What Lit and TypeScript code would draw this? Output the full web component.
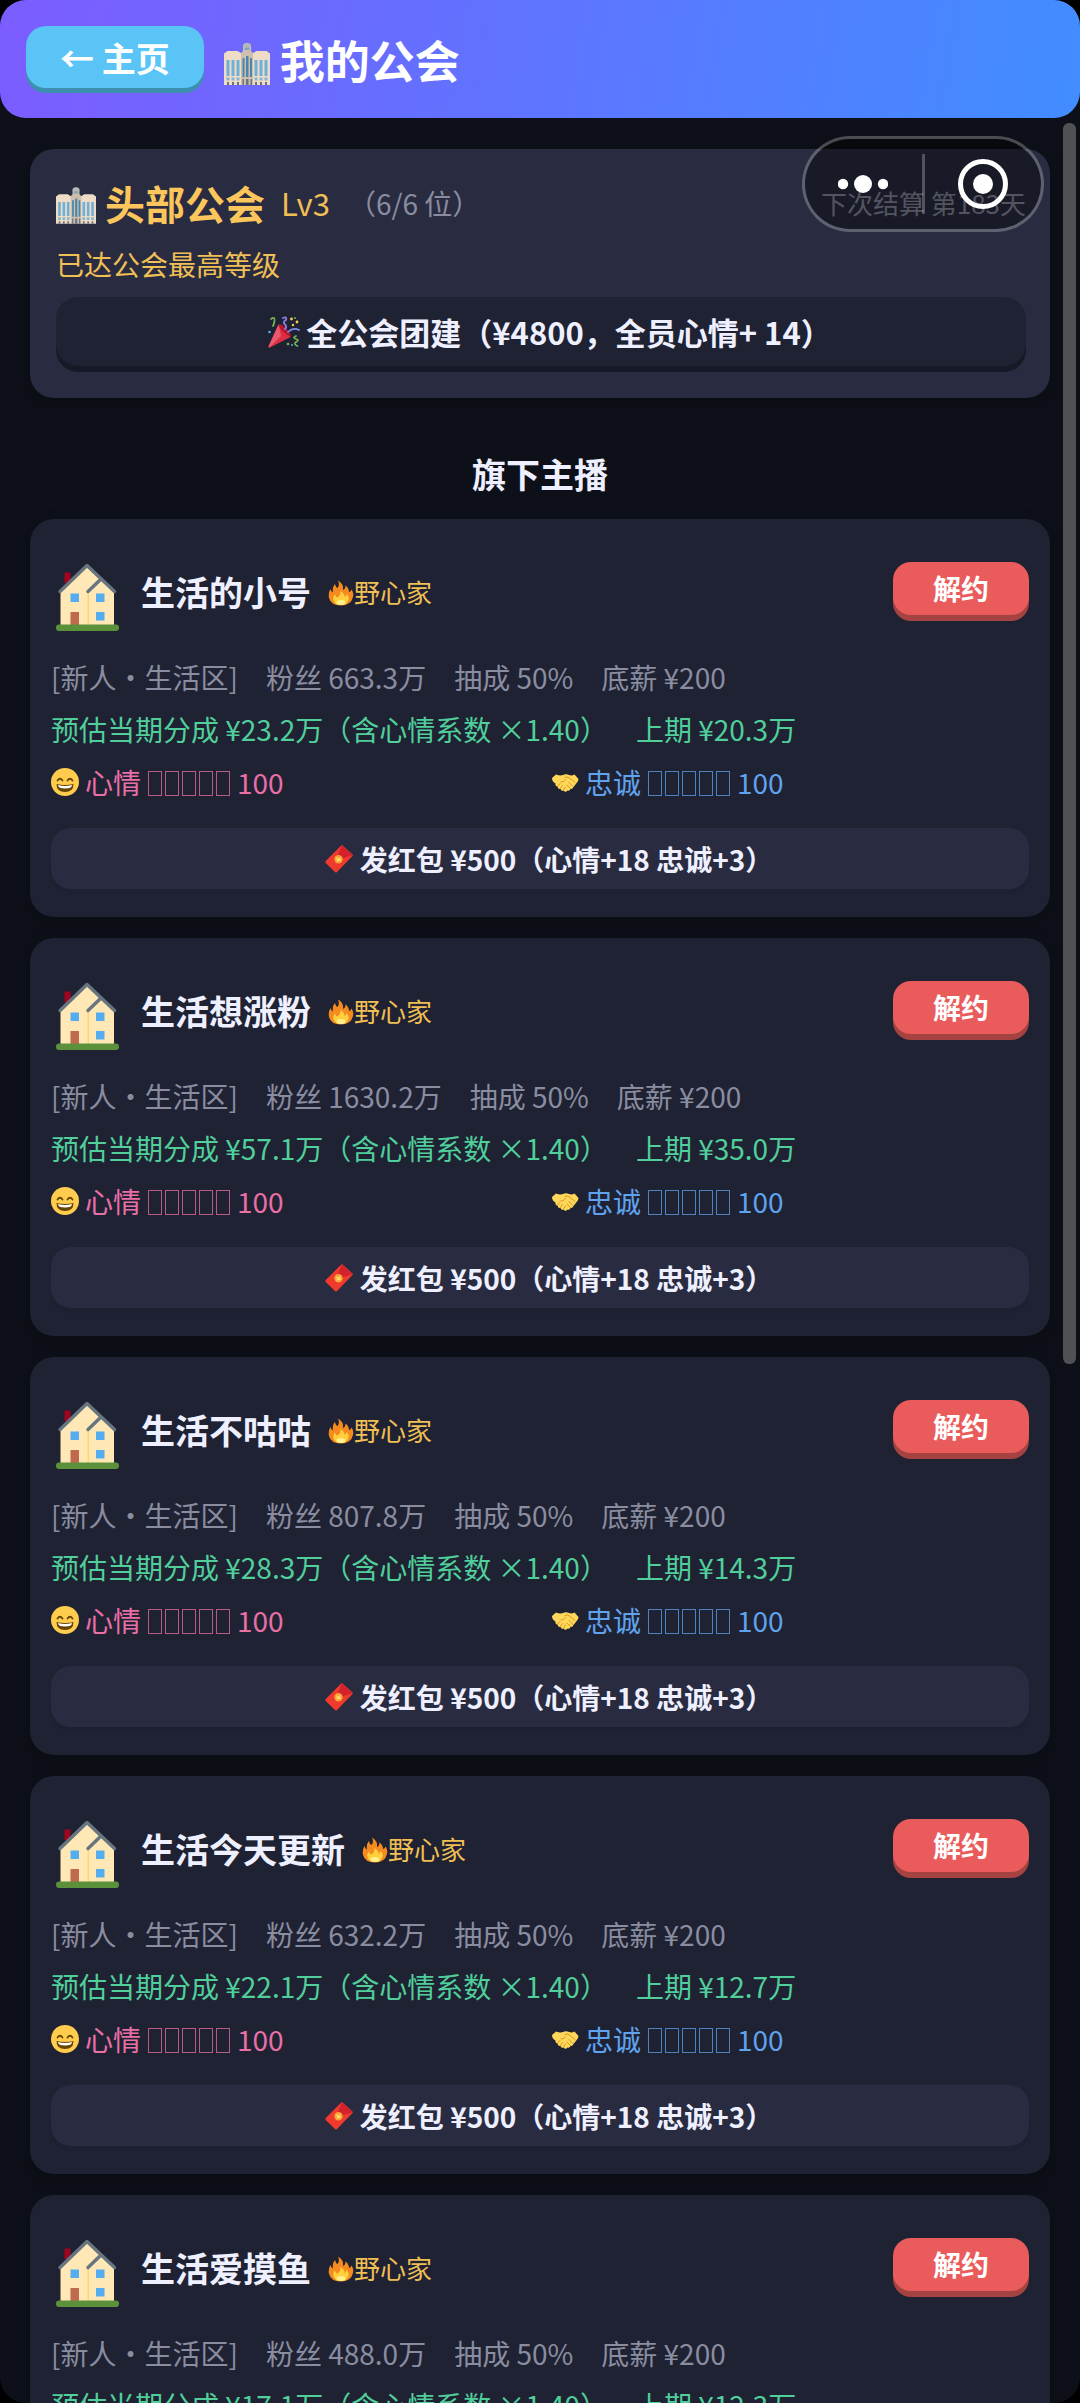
import { LitElement, html, css, svg } from "lit";
import { customElement, property } from "lit/decorators.js";

interface Streamer {
  name: string;
  fans: string;
  share: string;
  last: string;
}

const STREAMERS: Streamer[] = [
  { name: "生活的小号", fans: "663.3万", share: "¥23.2万", last: "¥20.3万" },
  { name: "生活想涨粉", fans: "1630.2万", share: "¥57.1万", last: "¥35.0万" },
  { name: "生活不咕咕", fans: "807.8万", share: "¥28.3万", last: "¥14.3万" },
  { name: "生活今天更新", fans: "632.2万", share: "¥22.1万", last: "¥12.7万" },
  { name: "生活爱摸鱼", fans: "488.0万", share: "¥17.1万", last: "¥12.3万" },
];

const buildingIcon = html`<svg class="building" viewBox="0 0 46 43" aria-hidden="true">
  <path d="M0 10.500 L3.500 8 H13.500 L17.500 10.500 V42 H0Z M28.500 10.500 L32.500 8 H42.500 L46 10.500 V42 H28.500Z" fill="#efdcc6" />
  <path d="M17 10 L19 8 V3 Q19 0 23 0 Q27 0 27 3 V8 L29 10 V42 H17Z" fill="#cdbfae" />
  <path d="M19 4 Q19.500 0.500 23 0.500 Q26.500 0.500 27 4Z" fill="#aeb9bb" />
  <path d="M20.500 4.500 H25.500 V7 H20.500Z" fill="#7fa3b8" />
  <path d="M2.500 17 H5.500 V33 H2.500Z M7.500 17 H10.500 V33 H7.500Z M12.500 17 H15.500 V33 H12.500Z M30.500 17 H33.500 V33 H30.500Z M35.500 17 H38.500 V33 H35.500Z M40.500 17 H43.500 V33 H40.500Z" fill="#6fb0d8" />
  <path d="M18.500 15 H20.500 V34 H18.500Z M22 13 H24.500 V34 H22Z M26 15 H28 V34 H26Z" fill="#4c86ac" />
  <path d="M2.500 34.500 H5.500 V37.500 H2.500Z M7.500 34.500 H10.500 V37.500 H7.500Z M12.500 34.500 H15.500 V37.500 H12.500Z M30.500 34.500 H33.500 V37.500 H30.500Z M35.500 34.500 H38.500 V37.500 H35.500Z M40.500 34.500 H43.500 V37.500 H40.500Z" fill="#83b6d2" />
  <path d="M3 39 H5 V42 H3Z M8 39 H10 V42 H8Z M13 39 H15 V42 H13Z M18.500 36 H20 V42 H18.500Z M22 36 H24.500 V42 H22Z M26.500 36 H28 V42 H26.500Z M31 39 H33 V42 H31Z M36 39 H38 V42 H36Z M41 39 H43 V42 H41Z" fill="#6a7480" />
</svg>`;

const houseIcon = html`<svg class="house" viewBox="-5 -10 69 78" aria-hidden="true">
  <path d="M8.500 9.500 H14.500 V20 H8.500Z" fill="#a0041e" />
  <path d="M31 3 L58 29 V62 H4.500 V29Z" fill="#ffe8b6" />
  <path d="M31.500 30 H33 V62 H31.500Z" fill="#ffd767" />
  <path d="M4 28.500 L31 2.500 L58.500 28.500 M44 17 L32 28.500" fill="none" stroke="#66757f" stroke-width="3.400" stroke-linecap="round" stroke-linejoin="round" />
  <path d="M14.500 30.500 h8.500 v8.500 h-8.500Z M40 30.500 h8.500 v8.500 h-8.500Z M40 49 h8.500 v8.500 h-8.500Z" fill="#55acee" />
  <path d="M14.500 49 h8.500 v13 h-8.500Z" fill="#c1694f" />
  <rect x="0" y="61.500" width="63" height="6.500" rx="3" fill="#5c913b" />
</svg>`;

const fireIcon = html`<svg class="i26" viewBox="0 0 26 26" aria-hidden="true">
  <path d="M10 0.500 Q16 4 15 10 Q17.500 9 17.500 5.500 Q21 8 21 12 Q23 11.500 23.500 9.500 Q26 13 25 17 Q23 25.500 13 25.500 Q3 25.500 1 18 Q0 13 2.500 9 Q3 12 5 12.500 Q4 7 7 4 Q7.500 7 9.500 8 Q12 5 10 0.500Z" fill="#f58a1f" />
  <path d="M12.500 11 Q17 14 16.500 17 Q18.500 16 18.500 14 Q21.500 17 20.500 20 Q18.500 25 13 25 Q7.500 25 5.500 20.500 Q4.500 17 7 14.500 Q7.500 17 9.500 17.500 Q13 15 12.500 11Z" fill="#ffd03e" />
  <ellipse cx="13" cy="22.500" rx="4.500" ry="2.500" fill="#fff08a" />
</svg>`;

const grinIcon = html`<svg class="i28" viewBox="0 0 28 28" aria-hidden="true">
  <circle cx="14" cy="14" r="14" fill="#ffcc4d" />
  <path d="M6.500 12.500 Q9 9 11.500 12.500 M16.500 12.500 Q19 9 21.500 12.500" fill="none" stroke="#664500" stroke-width="1.800" stroke-linecap="round" />
  <path d="M5.500 16 Q14 18 22.500 16 Q22.500 24 14 24 Q5.500 24 5.500 16Z" fill="#664500" />
  <path d="M7 17 Q14 18.800 21 17 Q21 20.500 14 20.500 Q7 20.500 7 17Z" fill="#fff" />
</svg>`;

const shakeIcon = html`<svg class="i28" viewBox="0 0 28 28" aria-hidden="true">
  <path d="M1 10 L5 6.500 Q9 8 12 7 Q15 5.500 18 7 Q21 8 23.500 6.500 L27.500 11 Q27.500 13 24.500 16.500 L22.500 19 Q21.500 21.500 19.500 21 Q18.500 23.500 16.500 22.500 Q14.500 25 12.500 22.500 Q10 23.500 9.500 21 Q7 21.500 6.500 18.500 Q4 18 4.500 15.500 Q1 13.500 1 10Z" fill="#ffd75a" />
  <path d="M14 9.500 Q16 8 18.500 10 L24 14.500 M10 14 Q13 14.500 14.500 11.500 M6.500 18 L9 15.500 M9.500 20.500 L11.500 17.500 M12.500 22 L14.500 19 M19.500 20.500 L16 17 M22 18.500 L18 14.500" fill="none" stroke="#d99a1c" stroke-width="1" stroke-linecap="round" />
</svg>`;

const envelopeIcon = html`<svg class="i28" viewBox="0 0 28 28" aria-hidden="true">
  <path d="M17.500 0.500 L27.500 9.500 Q28 10.200 27.500 11 L12 27 Q11 28 10 27 L0.700 18 Q0 17 0.700 16 L16 0.700 Q16.800 0 17.500 0.500Z" fill="#f03a2e" />
  <path d="M16.700 0.300 L27.700 10.200 L15 14 Q12.500 14 12.500 11Z" fill="#d3222b" />
  <circle cx="13.500" cy="14.300" r="4.200" fill="#f9a03a" />
  <path d="M11.500 12.500 L13 15.500 L16 15 M12 16.500 L15 12.500" fill="none" stroke="#ffe066" stroke-width="1.300" />
</svg>`;

const popperIcon = html`<svg class="i32" viewBox="0 0 32 32" aria-hidden="true">
  <path d="M10.500 8.500 Q17 11 22.500 21 L2 31.500 Q0 32 0.700 30Z" fill="#dd2e44" />
  <path d="M10.500 8.500 L13 20 L1.500 31.600 Q0.200 31.500 0.700 30Z" fill="#ea596e" />
  <path d="M10.500 8.500 Q12 15 22.500 21 Q24 19 19 13 Q13 7 10.500 8.500Z" fill="#b3162d" />
  <path d="M3 3 Q7 0 6.500 5 Q6 8 5 10 M28 20 Q24 21.500 28 23 Q32 24 28 26 Q25 28 29.500 30" fill="none" stroke="#77b255" stroke-width="1.700" stroke-linecap="round" />
  <path d="M15 2 Q19 0 18 4 Q14 6 17.500 9 Q19 11 17 13" fill="none" stroke="#8c7be0" stroke-width="1.900" stroke-linecap="round" />
  <path d="M20 16 Q25 11 31 14" fill="none" stroke="#7d8fe8" stroke-width="1.700" stroke-linecap="round" />
  <g fill="#ffcc4d"><circle cx="23.500" cy="3" r="1.400" /><circle cx="29" cy="6" r="1.400" /><circle cx="25" cy="9" r="1.200" /></g>
  <g fill="#55acee"><circle cx="1.500" cy="16" r="1.300" /><circle cx="24" cy="29" r="1" /></g>
  <g fill="#77b255"><circle cx="20" cy="28" r="1.300" /><circle cx="27" cy="2" r="1" /></g>
</svg>`;

const base = css`
  * {
    box-sizing: border-box;
  }
  button {
    font-family: inherit;
    border: 0;
    margin: 0;
    cursor: pointer;
    display: flex;
    align-items: center;
    justify-content: center;
    font-weight: 700;
  }
  svg {
    display: block;
    flex: none;
  }
  .i26 {
    width: 26px;
    height: 26px;
  }
  .i28 {
    width: 28px;
    height: 28px;
  }
  .i32 {
    width: 32px;
    height: 32px;
  }
`;

@customElement("stat-gauge")
class StatGauge extends LitElement {
  @property() label = "";
  @property({ type: Number }) value = 0;

  static styles = [
    base,
    css`
      :host {
        display: flex;
        align-items: center;
        gap: 7px;
      }
      .cells {
        display: flex;
        gap: 3px;
        padding-top: 3px;
      }
      .cell {
        width: 14px;
        height: 25px;
        border: 1px solid currentColor;
        opacity: 0.75;
      }
    `,
  ];

  render() {
    const cells = Array.from({ length: Math.round(this.value / 20) });
    return html`<span>${this.label}</span>
      <span class="cells" aria-hidden="true">${cells.map(() => html`<span class="cell"></span>`)}</span>
      <span>${this.value}</span>`;
  }
}

@customElement("streamer-card")
class StreamerCard extends LitElement {
  @property({ attribute: false }) data!: Streamer;

  static styles = [
    base,
    css`
      :host {
        display: block;
      }
      .card {
        background: #1f2233;
        border-radius: 24px;
        padding: 21px 21px 28px;
        box-shadow: 0 4px 16px rgba(0, 0, 0, 0.22);
        font-size: 28px;
        line-height: 52px;
      }
      .head {
        display: flex;
        align-items: center;
        height: 104px;
        margin-bottom: 7px;
      }
      .house {
        width: 69px;
        height: 78px;
        margin-right: 21px;
      }
      .name {
        margin: 0 17px 0 0;
        font-size: 34px;
        font-weight: 700;
        color: #eef0ff;
      }
      .tag {
        display: flex;
        align-items: center;
        font-size: 26px;
        color: #f0bf55;
      }
      .fire {
        padding-top: 2px;
      }
      .drop {
        margin: 0 0 8px auto;
        height: 53px;
        padding: 0 40px;
        border-radius: 18px;
        background: #ea5c5c;
        box-shadow: 0 6px 0 #a54242;
        color: #fff;
        font-size: 28px;
      }
      .line {
        margin: 0;
        white-space: nowrap;
      }
      .meta {
        color: #8a8da0;
      }
      .share {
        line-height: 53px;
        color: #50cf9b;
      }
      .last {
        margin-left: 14px;
      }
      .stats {
        display: grid;
        grid-template-columns: 1fr 1fr;
        gap: 22px;
      }
      .stat {
        display: flex;
        align-items: center;
        gap: 6px;
      }
      .mood {
        color: #e96fa6;
      }
      .loyal {
        color: #5fa3ee;
      }
      .gift {
        width: 100%;
        height: 61px;
        margin-top: 20px;
        padding: 0 0 0 18px;
        gap: 7px;
        border-radius: 20px;
        background: #292c41;
        box-shadow: 0 5px 0 #1d2030;
        color: #eef0ff;
        font-size: 28px;
      }
    `,
  ];

  render() {
    const d = this.data;
    return html`<article class="card">
      <div class="head">
        ${houseIcon}
        <h3 class="name">${d.name}</h3>
        <span class="tag"><span class="fire">${fireIcon}</span>野心家</span>
        <button class="drop" type="button">解约</button>
      </div>
      <p class="line meta">[新人・生活区]　粉丝 ${d.fans}　抽成 50%　底薪 ¥200</p>
      <p class="line share">预估当期分成 ${d.share}（含心情系数 ×1.40）　<span class="last">上期 ${d.last}</span></p>
      <div class="stats">
        <div class="stat mood">${grinIcon}<stat-gauge label="心情" .value=${100}></stat-gauge></div>
        <div class="stat loyal">${shakeIcon}<stat-gauge label="忠诚" .value=${100}></stat-gauge></div>
      </div>
      <button class="gift" type="button">${envelopeIcon}发红包 ¥500（心情+18 忠诚+3）</button>
    </article>`;
  }
}

@customElement("app-root")
class AppRoot extends LitElement {
  static styles = [
    base,
    css`
      :host {
        display: block;
        background: #000;
        font-family: "Noto Sans CJK SC", "Noto Sans", sans-serif;
      }
      .shell {
        position: relative;
        display: flex;
        flex-direction: column;
        height: 100vh;
        overflow: hidden;
        border-radius: 26px;
        background: #0d1018;
      }
      .bar {
        flex: none;
        display: flex;
        align-items: center;
        gap: 20px;
        height: 118px;
        padding: 0 26px;
        border-radius: 0 0 26px 26px;
        background: linear-gradient(100deg, #7c5cff, #418dff);
      }
      .home {
        height: 62px;
        margin-bottom: 4px;
        padding: 0 34px;
        border-radius: 20px;
        background: #5ac4f6;
        box-shadow: 0 5px 0 #3c8fae;
        color: #fff;
        font-size: 34px;
      }
      .title {
        display: flex;
        align-items: center;
        gap: 10px;
        margin: 0;
        padding-top: 2px;
        font-size: 45px;
        line-height: 60px;
        color: #fff;
      }
      .title .building {
        width: 46px;
        height: 43px;
        margin-top: 8px;
      }
      .main {
        flex: 1;
        min-height: 0;
        overflow: hidden auto;
        scrollbar-width: none;
        padding: 31px 30px 0;
      }
      .guild {
        padding: 24px 24px 26px 26px;
        border-radius: 24px;
        background: #292c41;
        box-shadow: 0 4px 16px rgba(0, 0, 0, 0.22);
      }
      .row {
        display: flex;
        align-items: center;
        line-height: 60px;
        white-space: nowrap;
      }
      .row .building {
        width: 40px;
        height: 38px;
        margin: 6px 9px 0 0;
      }
      .gname {
        margin: 0;
        font-size: 40px;
        color: #fcc65c;
      }
      .lv {
        margin: 0 18px 0 16px;
        font-size: 31px;
        color: #f0bf55;
      }
      .count,
      .due {
        font-size: 28px;
        color: #8a8da0;
      }
      .due {
        margin-left: auto;
        font-size: 26px;
      }
      .max {
        margin: 11px 0 13px;
        font-size: 28px;
        line-height: 40px;
        color: #f0bf55;
      }
      .party {
        width: 100%;
        height: 69px;
        margin-bottom: 6px;
        padding: 0 0 0 18px;
        gap: 6px;
        border-radius: 22px;
        background: #1f2233;
        box-shadow: 0 6px 0 #171926;
        color: #eef0ff;
        font-size: 31px;
        line-height: 60px;
      }
      .sub {
        margin: 51px 0 20px;
        font-size: 34px;
        line-height: 50px;
        text-align: center;
        color: #eef0ff;
      }
      .list {
        display: flex;
        flex-direction: column;
        gap: 21px;
      }
      .thumb {
        position: absolute;
        top: 123px;
        right: 4px;
        width: 13px;
        height: 1241px;
        border-radius: 6px;
        background: #4f5154;
      }
      .capsule {
        position: absolute;
        top: 136px;
        right: 36px;
        width: 242px;
        height: 96px;
        display: flex;
        align-items: center;
        border: 3px solid rgba(255, 255, 255, 0.25);
        border-radius: 48px;
        background: rgba(0, 0, 0, 0.4);
        background-clip: padding-box;
      }
      .cap {
        flex: 1;
        height: 100%;
        padding: 0;
        background: none;
      }
      .split {
        width: 3px;
        height: 60px;
        background: rgba(255, 255, 255, 0.25);
      }
      .dots {
        width: 50px;
        height: 20px;
      }
      .ring {
        width: 52px;
        height: 52px;
      }
    `,
  ];

  render() {
    return html`<div class="shell">
      <header class="bar">
        <button class="home" type="button">← 主页</button>
        <h1 class="title">${buildingIcon}我的公会</h1>
      </header>
      <main class="main">
        <section class="guild">
          <div class="row">
            ${buildingIcon}
            <h2 class="gname">头部公会</h2>
            <span class="lv">Lv3</span>
            <span class="count">（6/6 位）</span>
            <span class="due">下次结算 第183天</span>
          </div>
          <p class="max">已达公会最高等级</p>
          <button class="party" type="button">${popperIcon}全公会团建（¥4800，全员心情+ 14）</button>
        </section>
        <h2 class="sub">旗下主播</h2>
        <div class="list">${STREAMERS.map((s) => html`<streamer-card .data=${s}></streamer-card>`)}</div>
      </main>
      <div class="thumb"></div>
      <div class="capsule">
        <button class="cap" type="button" aria-label="更多">
          <svg class="dots" viewBox="0 0 50 20" aria-hidden="true">
            ${svg`<g fill="#fff"><circle cx="5" cy="10" r="5.200" /><circle cx="25" cy="10" r="9" /><circle cx="45" cy="10" r="5.200" /></g>`}
          </svg>
        </button>
        <span class="split"></span>
        <button class="cap" type="button" aria-label="关闭">
          <svg class="ring" viewBox="0 0 52 52" aria-hidden="true">
            <circle cx="26" cy="26" r="22.500" fill="none" stroke="#fff" stroke-width="5" />
            <circle cx="26" cy="26" r="10" fill="#fff" />
          </svg>
        </button>
      </div>
    </div>`;
  }
}
